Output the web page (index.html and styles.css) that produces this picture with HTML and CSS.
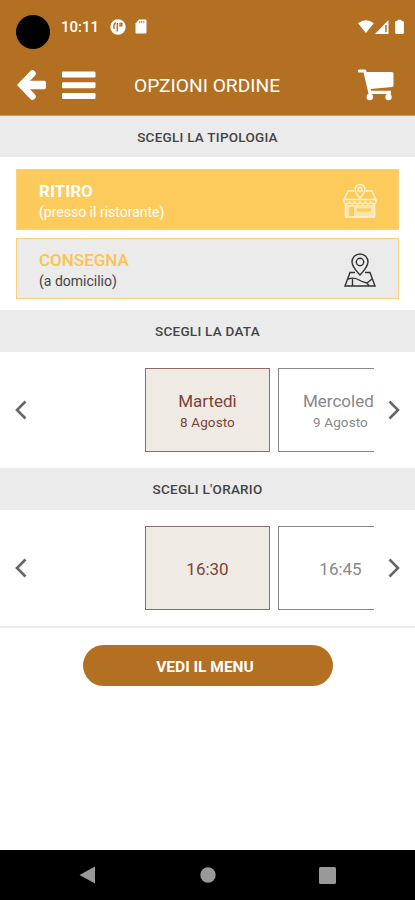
FILE: index.html
```
<!DOCTYPE html>
<html lang="it">
<head>
    <meta charset="UTF-8">
    <meta name="viewport" content="width=device-width, initial-scale=1.0">
    <title>Opzioni ordine</title>
    <link rel="stylesheet" href="styles.css">
</head>
<body>

    <header class="header">
        <div class="status-bar">
            <span class="camera"></span>
            <span class="clock">10:11</span>
            <svg class="status-app" width="16" height="16" viewBox="0 0 16 16">
                <circle cx="8" cy="8" r="7.7" fill="#fff"/>
                <path d="M5.8 3.6Q2.800 6 4.300 10M7.300 4v8.500M10 4.500h1.800v2.200H10z" fill="none" stroke="#b37023" stroke-width="1.4"/>
            </svg>
            <svg class="status-sd" width="12" height="15" viewBox="0 0 12 15">
                <path d="M4 .5h6.5q1 0 1 1v12q0 1-1 1h-9q-1 0-1-1V4.5z" fill="#fff"/>
                <path d="M4.800 2v2.200M6.800 2v2.200M8.800 2v2.200" stroke="#b37023" stroke-width=".9"/>
            </svg>
            <svg class="status-signal" width="48" height="16" viewBox="0 0 48 16">
                <path d="M0 4.200Q7.800-1.600 15.800 4.200L7.900 14z" fill="#fff"/>
                <path d="M30.500 1v14H17z" fill="#fff"/>
                <path d="M28 6v7" stroke="#b37023" stroke-width="1.500"/>
                <path d="M39.500 2V.800h4V2h1q1.400 0 1.400 1.400V13.600q0 1.400-1.400 1.400h-6q-1.400 0-1.400-1.400V3.400Q37.100 2 38.500 2z" fill="#fff"/>
            </svg>
        </div>
        <div class="toolbar">
            <button class="icon-btn" aria-label="Indietro">
                <svg width="29" height="32" viewBox="0 0 29 32">
                    <path d="M15.500 4.500 4.500 16l11 11.500" fill="none" stroke="#fff" stroke-width="6.500" stroke-linecap="round"/>
                    <rect x="3" y="11.800" width="26" height="8.400" rx="1.800" fill="#fff"/>
                </svg>
            </button>
            <button class="icon-btn menu-btn" aria-label="Menu">
                <svg width="34" height="29" viewBox="0 0 34 29">
                    <rect y="0.500" width="33.500" height="6" rx="1.200" fill="#fff"/>
                    <rect y="11.300" width="33.500" height="6" rx="1.200" fill="#fff"/>
                    <rect y="22" width="33.500" height="6" rx="1.200" fill="#fff"/>
                </svg>
            </button>
            <h1>OPZIONI ORDINE</h1>
            <button class="icon-btn cart-btn" aria-label="Carrello">
                <svg width="36" height="32" viewBox="0 0 36 32">
                    <path d="M1.500 2h5.300L12 24" fill="none" stroke="#fff" stroke-width="3.200" stroke-linecap="round" stroke-linejoin="round"/>
                    <path d="M8 3h26q1.500 0 1.500 1.500v12q0 1.200-1.300 1.400L12.500 20v1.800H33V25H11z" fill="#fff"/>
                    <circle cx="11.800" cy="28" r="3.200" fill="#fff"/>
                    <circle cx="30.500" cy="28" r="3.200" fill="#fff"/>
                </svg>
            </button>
        </div>
    </header>

    <main>
        <h2 class="first">SCEGLI LA TIPOLOGIA</h2>
        <div class="types">
            <div class="type active">
                <div>
                    <strong>RITIRO</strong>
                    <span>(presso il ristorante)</span>
                </div>
                <svg width="34" height="34" viewBox="0 0 34 34" fill="none" stroke="#fff3d4" stroke-width="1.500">
                    <path d="M11 7H5L1 16v2q2 4 5.300 0 2.700 4 5.300 0 2.700 4 5.400 0 2.700 4 5.400 0 2.600 4 5.300 0Q31 22 33 18v-2L29 7h-6"/>
                    <path d="M1 15.500h32M2.500 20v13h29V20"/>
                    <path d="M17 14q-5-5.500-5-8.500a5 5 0 0 1 10 0q0 3-5 8.500z"/>
                    <circle cx="17" cy="5.500" r="2"/>
                    <path d="M3 21h28v12H11V23H6v10H3zM14 24.500v3h14v-3z" fill="#fff3d4" fill-opacity=".65" fill-rule="evenodd" stroke="none"/>
                </svg>
            </div>
            <div class="type">
                <div>
                    <strong>CONSEGNA</strong>
                    <span>(a domicilio)</span>
                </div>
                <svg width="34" height="34" viewBox="0 0 34 34" fill="none" stroke="#333" stroke-width="1.400">
                    <path d="M17 22Q9 13.500 9 9a8 8 0 0 1 16 0q0 4.500-8 13z"/>
                    <circle cx="17" cy="9" r="3.700"/>
                    <path d="M12 19.500H7L2 33h30l-5-13.500h-5"/>
                    <path d="M5 26q6-2 10 .500t9 3.500l5-4M9.500 26v7M24 30l2 3"/>
                </svg>
            </div>
        </div>

        <h2>SCEGLI LA DATA</h2>
        <div class="slider">
            <button class="arrow" aria-label="Precedente">
                <svg width="12" height="20" viewBox="0 0 12 20"><path d="M10.500 1.500 2 10l8.500 8.500"/></svg>
            </button>
            <div class="slides">
                <div class="slide selected">
                    <span class="day">Martedì</span>
                    <span class="date">8 Agosto</span>
                </div>
                <div class="slide">
                    <span class="day">Mercoledì</span>
                    <span class="date">9 Agosto</span>
                </div>
            </div>
            <button class="arrow" aria-label="Successivo">
                <svg width="12" height="20" viewBox="0 0 12 20"><path d="M1.500 1.500 10 10l-8.500 8.500"/></svg>
            </button>
        </div>

        <h2>SCEGLI L'ORARIO</h2>
        <div class="slider">
            <button class="arrow" aria-label="Precedente">
                <svg width="12" height="20" viewBox="0 0 12 20"><path d="M10.500 1.500 2 10l8.500 8.500"/></svg>
            </button>
            <div class="slides">
                <div class="slide selected">
                    <span class="time">16:30</span>
                </div>
                <div class="slide">
                    <span class="time">16:45</span>
                </div>
            </div>
            <button class="arrow" aria-label="Successivo">
                <svg width="12" height="20" viewBox="0 0 12 20"><path d="M1.500 1.500 10 10l-8.500 8.500"/></svg>
            </button>
        </div>

        <div class="footer">
            <button class="submit">VEDI IL MENU</button>
        </div>
    </main>

    <nav class="android-nav">
        <svg width="17" height="18" viewBox="0 0 17 18"><path d="M16 .500v17L.500 9z"/></svg>
        <svg width="16" height="16" viewBox="0 0 16 16"><circle cx="8" cy="8" r="7.700"/></svg>
        <svg width="17" height="17" viewBox="0 0 17 17"><rect width="17" height="17" rx="1.500"/></svg>
    </nav>

</body>
</html>
```
FILE: styles.css
```
* {
    box-sizing: border-box;
}
body {
    font-family: Roboto, sans-serif;
    display: flex;
    flex-direction: column;
    height: 900px;
    margin: 0;
    background-color: #ffffff;
    color: #444;
    overflow: hidden;
}
button {
    font-family: inherit;
    padding: 0;
    border: none;
    background: none;
    cursor: pointer;
}
svg {
    display: block;
    flex-shrink: 0;
}

/* Header */
.header {
    height: 116px;
    background-color: #b37023;
    border-bottom: 1px solid #bd9a72;
    color: white;
}
.status-bar {
    display: flex;
    height: 55px;
    padding: 0 9px 0 16px;
}
.camera {
    width: 34px;
    height: 34px;
    margin-top: 15px;
    border-radius: 50%;
    background-color: #000;
}
.clock {
    width: 49px;
    margin: 17px 0 0 11px;
    font-size: 15px;
    line-height: 20px;
    font-weight: 500;
}
.status-app {
    margin-top: 19px;
}
.status-sd {
    margin: 19px 0 0 9px;
}
.status-signal {
    margin: 19px 0 0 auto;
}
.toolbar {
    display: flex;
    align-items: center;
    height: 60px;
    padding: 0 21px 0 17px;
}
.menu-btn {
    margin-left: 16px;
}
.toolbar h1 {
    margin: 0 0 0 38px;
    font-size: 19.2px;
    font-weight: 400;
}
.cart-btn {
    margin-left: auto;
}

h2 {
    height: 42px;
    margin: 0;
    background-color: #ebebeb;
    font-size: 13.5px;
    line-height: 43px;
    font-weight: 500;
    letter-spacing: 0.25px;
    text-align: center;
}
h2.first {
    height: 41px;
}

/* Tipologia */
.types {
    display: flex;
    flex-direction: column;
    gap: 8px;
    padding: 12px 16px 11px;
}
.type {
    display: flex;
    align-items: center;
    justify-content: space-between;
    height: 61px;
    padding: 3px 21px 0 22px;
    border: 1px solid #fbd07a;
    background-color: #ebebeb;
}
.type strong {
    display: block;
    color: #fbc34f;
    font-size: 17px;
    line-height: 20px;
    font-weight: 500;
}
.type span {
    display: block;
    margin-top: 1px;
    font-size: 14px;
    line-height: 20px;
}
.type.active {
    background-color: #fdcb5c;
}
.type.active strong {
    color: white;
    font-weight: 700;
}
.type.active span {
    color: white;
}

/* Data e orario */
.slider {
    display: flex;
    align-items: center;
    justify-content: space-between;
    height: 116px;
    padding: 0 15px;
}
.arrow svg {
    fill: none;
    stroke: #666;
    stroke-width: 2.6;
}
.slides {
    display: flex;
    gap: 8px;
    width: 333px;
    padding-left: 104px;
    overflow: hidden;
}
.slide {
    display: flex;
    flex-direction: column;
    align-items: center;
    justify-content: center;
    flex: 0 0 125px;
    height: 84px;
    padding-top: 2px;
    border: 1px solid #888;
    color: #888;
}
.slide.selected {
    border-color: #8d6b69;
    background-color: #f0eae5;
    color: #7b4337;
}
.day, .time {
    font-size: 17px;
    line-height: 22px;
}
.date {
    font-size: 13.5px;
    line-height: 20px;
    letter-spacing: 0.1px;
}

.footer {
    padding-top: 17px;
    border-top: 2px solid #ebebeb;
    text-align: center;
}
.submit {
    width: 250px;
    height: 41px;
    padding: 2px 5px 0 0;
    border-radius: 21px;
    background-color: #b37023;
    color: white;
    font-size: 15.5px;
    font-weight: 700;
}

.android-nav {
    display: flex;
    align-items: center;
    justify-content: space-between;
    height: 50px;
    margin-top: auto;
    padding: 0 79px;
    background-color: #000;
}
.android-nav svg {
    fill: #999;
}
```
